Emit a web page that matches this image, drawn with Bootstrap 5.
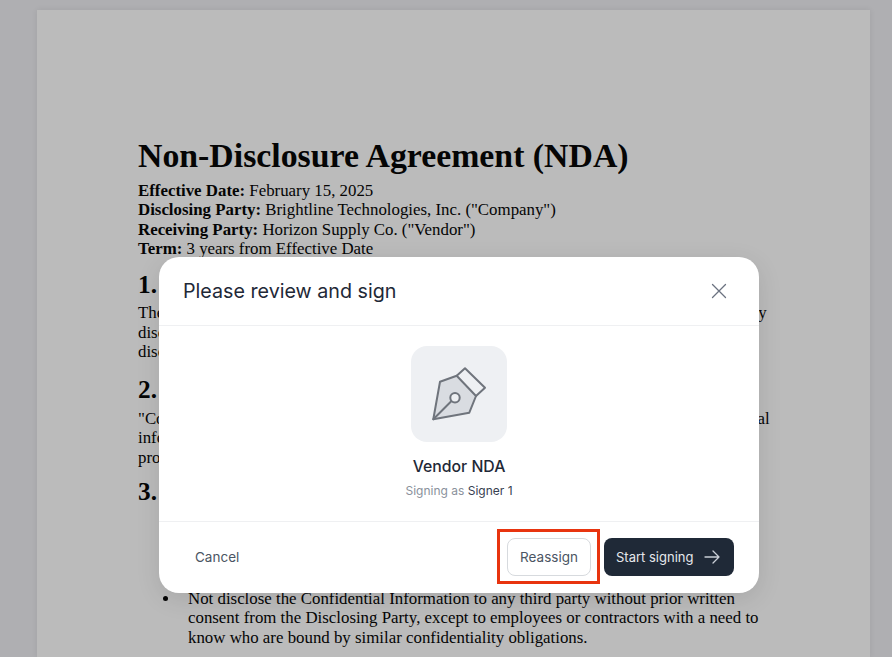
<!DOCTYPE html>
<html lang="en">
<head>
  <meta charset="UTF-8">
  <meta name="viewport" content="width=device-width, initial-scale=1.0">
  <title>Please review and sign</title>
  <link href="https://cdn.jsdelivr.net/npm/bootstrap@5.3.2/dist/css/bootstrap.min.css" rel="stylesheet">
  <style>
    html, body {
      height: 100%;
      overflow: hidden;
    }
    body {
      background-color: #afafb2;
      font-family: "Inter", sans-serif;
    }
    .doc-wrap {
      height: 100%;
      padding: 10px 22px 0 37px;
    }
    .doc-page {
      background-color: #bbbbbb;
      box-shadow: 0 0 6px rgba(0, 0, 0, 0.08);
      padding: 126px 90px 0 101px;
      height: 100%;
      overflow: hidden;
      color: #050505;
      font-family: "Liberation Serif", serif;
      font-size: 16.85px;
      line-height: 19.5px;
    }
    .doc-page h1 {
      font-family: "Liberation Serif", serif;
      font-weight: 700;
      font-size: 33.8px;
      line-height: 39px;
      margin: 0 0 5.5px;
    }
    .doc-page h2 {
      font-family: "Liberation Serif", serif;
      font-weight: 700;
      font-size: 25.3px;
      line-height: 29px;
      margin: 11.5px 0 4px;
    }
    .doc-page p {
      margin: 0;
    }
    .doc-section {
      height: 60px;
    }
    .doc-section-short {
      height: 57.5px;
      padding-top: 1px;
    }
    .doc-gap {
      height: 79px;
    }
    .doc-page ul {
      list-style: none;
      padding-left: 50px;
      margin: 0;
    }
    .doc-page li {
      position: relative;
    }
    .doc-page li::before {
      content: "";
      position: absolute;
      left: -25px;
      top: 7px;
      width: 5px;
      height: 5px;
      border-radius: 50%;
      background-color: #050505;
    }
    .sign-overlay {
      position: absolute;
      top: 257px;
      left: 159px;
      width: 600px;
    }
    .sign-dialog {
      background-color: #fff;
      border: 0;
      border-radius: 20px;
      color: #1f2937;
      box-shadow: 0 6px 24px rgba(0, 0, 0, 0.1);
    }
    .sign-dialog .modal-header {
      height: 69px;
      padding: 0 24px;
      border-bottom: 1px solid #eff0f2;
    }
    .sign-dialog .modal-title {
      font-size: 19.7px;
      line-height: 28px;
      font-weight: 400;
      color: #1f2937;
    }
    .sign-close {
      background: none;
      border: 0;
      padding: 0;
      width: 24px;
      height: 24px;
      color: #6b7280;
      margin-right: 4px;
    }
    .sign-dialog .modal-body {
      height: 195px;
      padding: 20px 0 0;
    }
    .pen-tile {
      width: 96px;
      height: 96px;
      border-radius: 16px;
      background-color: #eef0f3;
      margin-bottom: 14px;
    }
    .doc-name {
      font-size: 15.8px;
      line-height: 22px;
      font-weight: 500;
      color: #1f2937;
      margin-bottom: 5px;
    }
    .signer-line {
      font-size: 12px;
      line-height: 16px;
      color: #8a919c;
    }
    .signer-line span {
      color: #374151;
    }
    .sign-dialog .modal-footer {
      height: 72px;
      padding: 0 25px 1px 24px;
      border-top: 1px solid #eff0f2;
      flex-wrap: nowrap;
    }
    .sign-dialog .modal-footer > * {
      margin: 0;
    }
    .btn-cancel, .btn-reassign, .btn-start {
      font-size: 13.5px;
      line-height: 20px;
      height: 38px;
      border-radius: 8px;
    }
    .btn-cancel {
      color: #4b5563;
      padding: 0 12px;
      border: 0;
    }
    .btn-reassign {
      width: 84px;
      padding: 0;
      color: #4b5563;
      background: #fff;
      border: 1px solid #d7dade;
    }
    .btn-start {
      width: 130px;
      padding: 0 14px 0 12px;
      font-size: 13px;
      color: #e5e7eb;
      background-color: #1f2937;
      border: 0;
    }
    .btn-start:hover {
      background-color: #111827;
      color: #fff;
    }
    .btn-start svg {
      color: #c9ced6;
    }
    .action-group {
      gap: 13px;
    }
    .callout {
      position: relative;
    }
    .callout::after {
      content: "";
      position: absolute;
      top: -9px;
      bottom: -8px;
      left: -10px;
      right: -9px;
      border: 3px solid #e8340f;
      pointer-events: none;
    }
  </style>
</head>
<body>
  <div class="doc-wrap">
    <div class="doc-page">
      <h1>Non-Disclosure Agreement (NDA)</h1>
      <p><strong>Effective Date:</strong> February 15, 2025</p>
      <p><strong>Disclosing Party:</strong> Brightline Technologies, Inc. ("Company")</p>
      <p><strong>Receiving Party:</strong> Horizon Supply Co. ("Vendor")</p>
      <p><strong>Term:</strong> 3 years from Effective Date</p>

      <h2>1. Purpose</h2>
      <div class="doc-section">
        <p>The parties wish to explore a business relationship and may need to share information openly<br>
        disclose in confidence. This Agreement sets out the terms on which the parties will share<br>
        disclosures.</p>
      </div>

      <h2>2. Confidential Information</h2>
      <div class="doc-section-short">
        <p>"Confidential Information" means any non-public business, financial, technical or operational<br>
        information disclosed by one party to the other, including trade secrets, data and<br>
        product plans.</p>
      </div>

      <h2>3. Obligations</h2>
      <div class="doc-gap"></div>
      <ul>
        <li>Not disclose the Confidential Information to any third party without prior written<br>
        consent from the Disclosing Party, except to employees or contractors with a need to<br>
        know who are bound by similar confidentiality obligations.</li>
      </ul>
    </div>
  </div>

  <div class="sign-overlay">
    <div class="modal-content sign-dialog">
      <div class="modal-header d-flex justify-content-between align-items-center">
        <h5 class="modal-title">Please review and sign</h5>
        <button type="button" class="sign-close d-flex align-items-center justify-content-center" aria-label="Close">
          <svg width="24" height="24" viewBox="0 0 24 24" fill="none" stroke="currentColor" stroke-width="1.300" stroke-linecap="round"><path d="M5.500 5.500l13 13M18.500 5.500l-13 13"/></svg>
        </button>
      </div>
      <div class="modal-body d-flex flex-column align-items-center text-center">
        <div class="pen-tile">
          <svg width="96" height="96" viewBox="0 0 96 96" fill="none" stroke="#6f747c" stroke-width="2" stroke-linejoin="round" stroke-linecap="round">
            <path d="M22.300 73.300L29 35.700L45.700 29.700L65 50L58.300 66.700Z" fill="#d9dce1"/>
            <path d="M45.700 29.700L54 22.300L74 41.700L65 50"/>
            <path d="M22.300 73.300L40.500 55"/>
            <circle cx="44" cy="51.700" r="4.700" fill="#eef0f3"/>
          </svg>
        </div>
        <div class="doc-name">Vendor NDA</div>
        <div class="signer-line">Signing as <span>Signer 1</span></div>
      </div>
      <div class="modal-footer d-flex justify-content-between align-items-center">
        <button type="button" class="btn btn-cancel">Cancel</button>
        <div class="d-flex align-items-center action-group">
          <div class="callout d-flex">
            <button type="button" class="btn btn-reassign">Reassign</button>
          </div>
          <button type="button" class="btn btn-start d-flex align-items-center justify-content-between">
            Start signing
            <svg width="16" height="14" viewBox="0 0 16 14" fill="none" stroke="currentColor" stroke-width="1.300" stroke-linecap="round" stroke-linejoin="round"><path d="M1 7h14M9 1l6 6-6 6"/></svg>
          </button>
        </div>
      </div>
    </div>
  </div>

  <script src="https://cdn.jsdelivr.net/npm/bootstrap@5.3.2/dist/js/bootstrap.bundle.min.js"></script>
</body>
</html>
